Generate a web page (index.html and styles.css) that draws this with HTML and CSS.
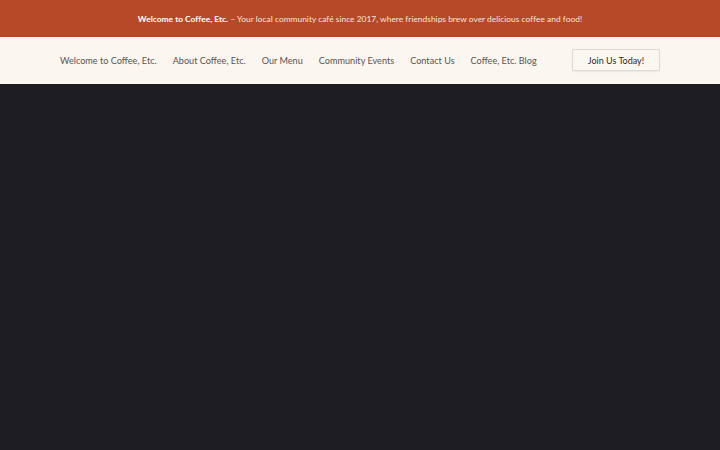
FILE: index.html
```html
<!DOCTYPE html>
<html lang="en">
<head>
<meta charset="utf-8">
<title>Coffee, Etc.</title>
<link rel="stylesheet" href="styles.css">
</head>
<body>
<div class="announce">
  <p class="announce-text"><strong>Welcome to Coffee, Etc.</strong> – Your local community café since 2017, where friendships brew over delicious coffee and food!</p>
</div>
<header class="nav">
  <nav class="nav-links">
    <a href="#" class="nav-link">Welcome to Coffee, Etc.</a>
    <a href="#" class="nav-link">About Coffee, Etc.</a>
    <a href="#" class="nav-link">Our Menu</a>
    <a href="#" class="nav-link">Community Events</a>
    <a href="#" class="nav-link">Contact Us</a>
    <a href="#" class="nav-link">Coffee, Etc. Blog</a>
  </nav>
  <a href="#" class="join-btn">Join Us Today!</a>
</header>
<main class="hero"></main>
</body>
</html>
```
FILE: styles.css
```css
* { box-sizing: border-box; }
html, body { margin: 0; padding: 0; height: 100%; }
body {
  font-family: "Lato", "Open Sans", sans-serif;
  background: #1e1d22;
  display: flex;
  flex-direction: column;
}
.announce {
  background: #b64a28;
  height: 37px;
  flex: none;
  display: flex;
  align-items: center;
  justify-content: center;
}
.announce-text {
  margin: 0;
  color: #f6e3d8;
  font-size: 8.4px;
  letter-spacing: 0.02px;
  white-space: nowrap;
}
.announce-text strong { color: #ffffff; font-weight: 700; }
.nav {
  background: #fbf6ef;
  height: 47px;
  flex: none;
  display: flex;
  align-items: center;
  padding: 0 60px;
}
.nav-links {
  display: flex;
  gap: 16px;
  flex: 1;
  white-space: nowrap;
  margin-top: -1px;
}
.nav-link {
  color: #5a5552;
  font-size: 9.15px;
  text-decoration: none;
}
.join-btn {
  flex: none;
  display: flex;
  align-items: center;
  justify-content: center;
  width: 88px;
  height: 22px;
  margin-top: -1px;
  border: 1px solid #dcd8d4;
  border-radius: 2px;
  background: #fbf7f1;
  color: #2e2a28;
  font-size: 9px;
  white-space: nowrap;
  text-decoration: none;
  box-shadow: 0 1px 2px rgba(0,0,0,0.06);
}
.hero { flex: 1; background: #1e1d22; }
```
